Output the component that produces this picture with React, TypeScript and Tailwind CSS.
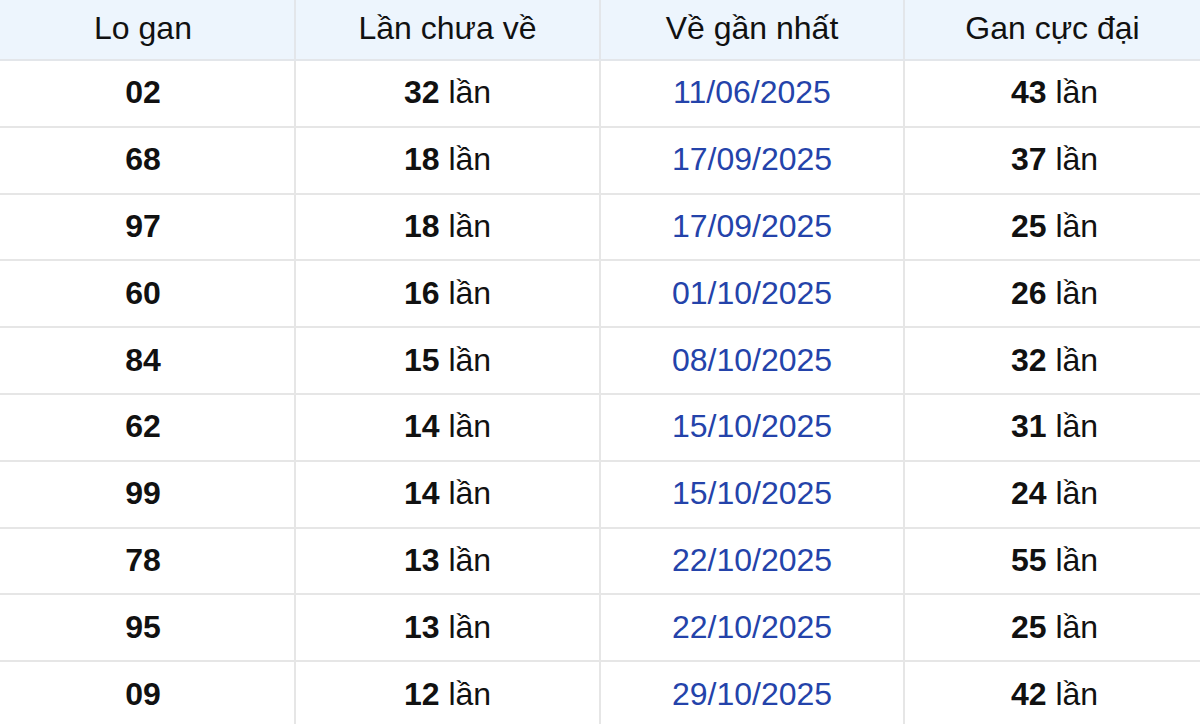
const rows = [
  { lo: '02', count: 32, date: '11/06/2025', max: 43 },
  { lo: '68', count: 18, date: '17/09/2025', max: 37 },
  { lo: '97', count: 18, date: '17/09/2025', max: 25 },
  { lo: '60', count: 16, date: '01/10/2025', max: 26 },
  { lo: '84', count: 15, date: '08/10/2025', max: 32 },
  { lo: '62', count: 14, date: '15/10/2025', max: 31 },
  { lo: '99', count: 14, date: '15/10/2025', max: 24 },
  { lo: '78', count: 13, date: '22/10/2025', max: 55 },
  { lo: '95', count: 13, date: '22/10/2025', max: 25 },
  { lo: '09', count: 12, date: '29/10/2025', max: 42 },
]

export default function App() {
  return (
    <div className="w-[1200px] h-[724px] overflow-hidden bg-white font-['Liberation_Sans',Arial,sans-serif] text-[32px] text-[#111111]">
      <table className="w-full border-collapse table-fixed">
        <colgroup>
          <col className="w-[295px]" />
          <col className="w-[305px]" />
          <col className="w-[304px]" />
          <col className="w-[296px]" />
        </colgroup>
        <thead>
          <tr className="h-[60px] bg-[#edf5fd]">
            <th className="font-normal border-r-2 border-b-2 border-[#e3e6ea] text-center pr-2 pb-[3px]">Lo gan</th>
            <th className="font-normal border-x-2 border-b-2 border-[#e3e6ea] text-center pb-[3px]">Lần chưa về</th>
            <th className="font-normal border-x-2 border-b-2 border-[#e3e6ea] text-center pb-[3px]">Về gần nhất</th>
            <th className="font-normal border-l-2 border-b-2 border-[#e3e6ea] text-center pb-[3px]">Gan cực đại</th>
          </tr>
        </thead>
        <tbody>
          {rows.map((r, i) => (
            <tr key={i} className="h-[66.8px]">
              <td className="border-r-2 border-b-2 border-[#e6e6e6] text-center font-bold pr-2 pb-[2px]">{r.lo}</td>
              <td className="border-x-2 border-b-2 border-[#e6e6e6] text-center pb-[2px]">
                <b>{r.count}</b> lần
              </td>
              <td className="border-x-2 border-b-2 border-[#e6e6e6] text-center text-[#2443aa] pb-[2px]">{r.date}</td>
              <td className="border-l-2 border-b-2 border-[#e6e6e6] text-center pl-1 pb-[2px]">
                <b>{r.max}</b> lần
              </td>
            </tr>
          ))}
        </tbody>
      </table>
    </div>
  )
}
